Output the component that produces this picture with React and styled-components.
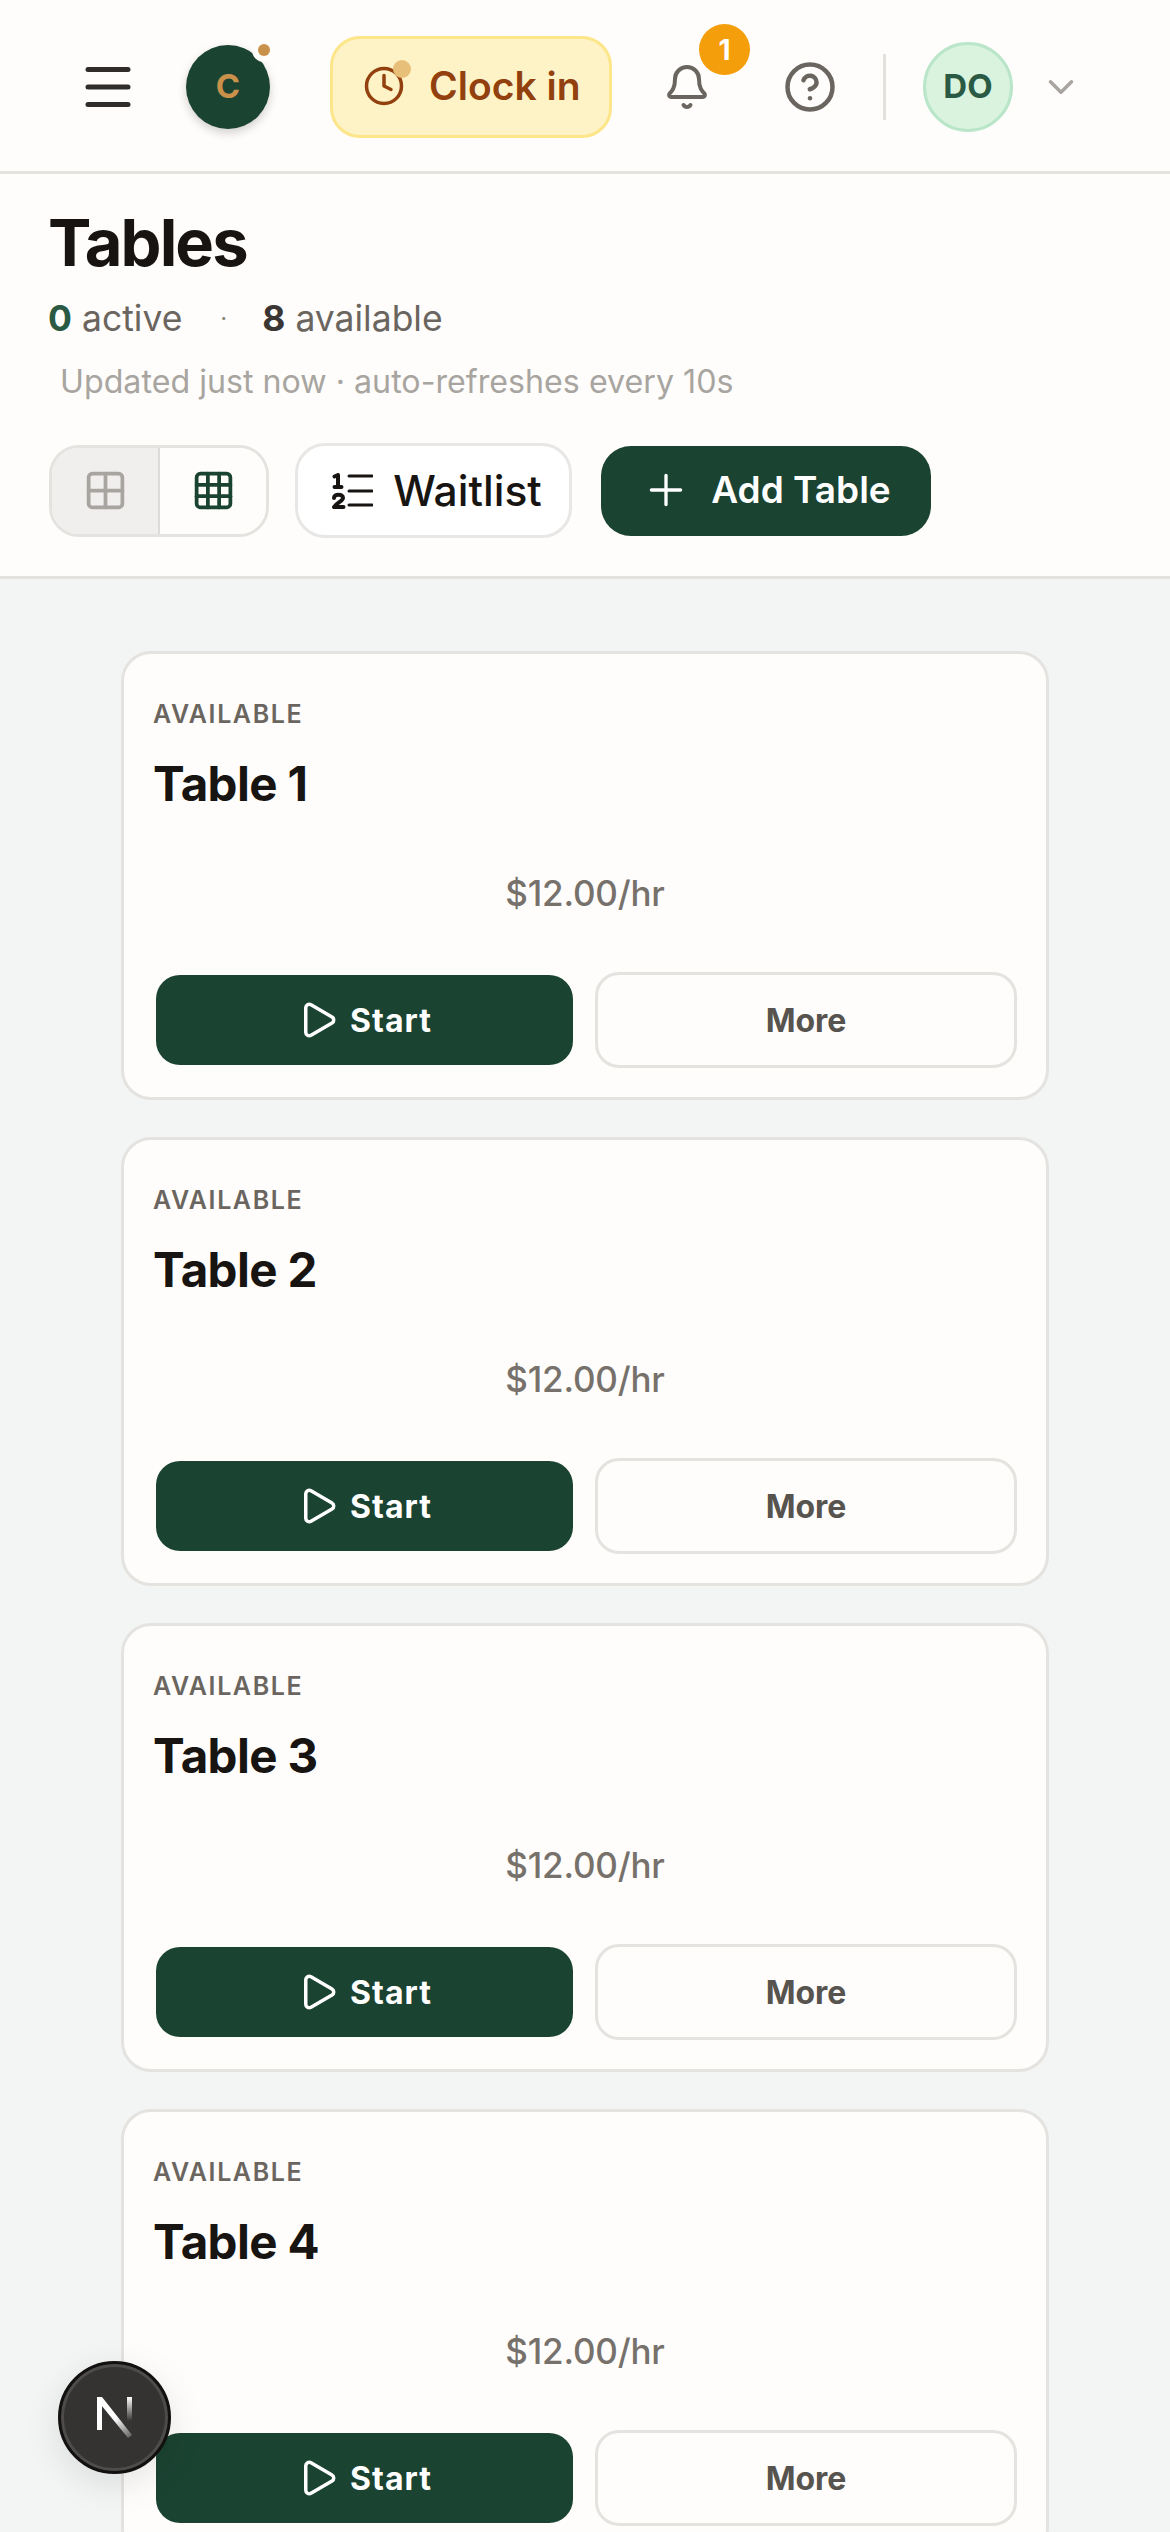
import React from "react";
import styled, { createGlobalStyle } from "styled-components";
import { Menu, Clock, Bell, CircleHelp, ChevronDown, Grid2x2, Grid3x3, Plus, Play } from "lucide-react";

const GlobalStyle = createGlobalStyle`
  html, body {
    margin: 0;
    padding: 0;
    background: #f3f5f5;
  }
  body {
    font-family: Inter, "Liberation Sans", sans-serif;
    color: #171412;
  }
  * { box-sizing: border-box; }
`;

const Page = styled.div`
  position: relative;
  width: 1170px;
  height: 2532px;
  overflow: hidden;
  background: #f3f5f5;
`;

const TopBar = styled.header`
  display: flex;
  align-items: center;
  height: 174px;
  padding: 3px 0 0 78px;
  background: #fefdfb;
  border-bottom: 3px solid #e4e3e0;
`;

const IconSlot = styled.div`
  position: relative;
  display: flex;
  margin-left: ${(props) => props.$left || 0}px;
  color: ${(props) => props.$color || "#6b6560"};
`;

const Logo = styled.div`
  position: relative;
  display: flex;
  align-items: center;
  justify-content: center;
  width: 84px;
  height: 84px;
  margin-left: 48px;
  padding-bottom: 3px;
  border-radius: 50%;
  background: #1b4332;
  color: #c9914a;
  font-size: 33px;
  font-weight: 700;
  box-shadow: 0 4px 10px rgba(0, 0, 0, 0.18);
`;

const LogoDot = styled.span`
  position: absolute;
  top: -1px;
  right: 0;
  width: 12px;
  height: 12px;
  border-radius: 50%;
  background: #c9914a;
  box-shadow: 0 0 0 6px #fefdfb;
`;

const ClockButton = styled.button`
  position: relative;
  display: flex;
  align-items: center;
  width: 282px;
  height: 102px;
  margin-left: 60px;
  padding: 0 0 3px 30px;
  gap: 24px;
  border: 3px solid #fde68a;
  border-radius: 30px;
  background: #fef3c7;
  color: #92400e;
  font-family: inherit;
  font-size: 39px;
  font-weight: 600;
`;

const ClockDot = styled.span`
  position: absolute;
  top: 21px;
  left: 60px;
  width: 18px;
  height: 18px;
  border-radius: 50%;
  background: #e8bf78;
`;

const Badge = styled.span`
  position: absolute;
  top: -39px;
  left: 36px;
  display: flex;
  align-items: center;
  justify-content: center;
  width: 51px;
  height: 51px;
  border-radius: 50%;
  background: #f59e0b;
  color: #ffffff;
  font-size: 28px;
  font-weight: 700;
`;

const Divider = styled.div`
  width: 3px;
  height: 66px;
  margin-left: 46px;
  background: #e2e1de;
`;

const Avatar = styled.div`
  display: flex;
  align-items: center;
  justify-content: center;
  width: 90px;
  height: 90px;
  margin-left: 37px;
  padding-bottom: 3px;
  border: 3px solid #b9e5c8;
  border-radius: 50%;
  background: #d9f3df;
  color: #2a5a43;
  font-size: 33px;
  font-weight: 700;
`;

const SubHeader = styled.section`
  height: 405px;
  padding: 30px 49px 0;
  background: #fefdfb;
  border-bottom: 3px solid #e4e1de;
`;

const Title = styled.h1`
  margin: 0 0 0 -1px;
  font-size: 65px;
  font-weight: 700;
  line-height: 78px;
  letter-spacing: -1.9px;
  color: #171412;
`;

const Stats = styled.div`
  display: flex;
  align-items: center;
  height: 48px;
  margin: 12px 0 0 -1px;
  font-size: 35.5px;
  color: #6b6560;
`;

const StatNumber = styled.strong`
  margin-right: 10px;
  font-weight: 700;
  color: ${(props) => props.$color};
`;

const StatDot = styled.span`
  margin: 0 35px 0 38px;
  font-size: 24px;
  color: #8b8580;
`;

const Updated = styled.div`
  margin: 18px 0 0 11px;
  font-size: 32.2px;
  line-height: 44px;
  color: #a8a5a0;
`;

const Toolbar = styled.div`
  display: flex;
  align-items: center;
  gap: 26px;
  margin-top: 39px;
`;

const ViewToggle = styled.div`
  display: flex;
  width: 220px;
  height: 92px;
  border: 3px solid #e4e3e0;
  border-radius: 30px;
  overflow: hidden;
`;

const ViewOption = styled.div`
  display: flex;
  align-items: center;
  justify-content: center;
  flex: 1;
  background: ${(props) => (props.$muted ? "#f0efed" : "#fefdfb")};
  border-right: ${(props) => (props.$muted ? "2px solid #dddcda" : "none")};
  color: ${(props) => (props.$muted ? "#a8a5a0" : "#1b4332")};
`;

const WaitlistButton = styled.button`
  display: flex;
  align-items: center;
  justify-content: center;
  gap: 20px;
  width: 277px;
  height: 95px;
  padding: 0 0 0 6px;
  border: 3px solid #e8e7e5;
  border-radius: 30px;
  background: #ffffff;
  color: #171412;
  font-family: inherit;
  font-size: 42.5px;
  font-weight: 500;
`;

const AddButton = styled.button`
  display: flex;
  align-items: center;
  justify-content: center;
  gap: 20px;
  width: 330px;
  height: 90px;
  margin: 1px 0 0 3px;
  padding: 0 0 3px;
  border: none;
  border-radius: 30px;
  background: #1b4332;
  color: #ffffff;
  font-family: inherit;
  font-size: 37px;
  font-weight: 600;
`;

const CardList = styled.main`
  display: flex;
  flex-direction: column;
  gap: 37px;
  padding: 72px 121px 0;
`;

const Card = styled.article`
  height: 449px;
  padding: 44px 29px 0;
  border: 3px solid #e4e3e0;
  border-radius: 30px;
  background: #fefdfb;
`;

const Status = styled.div`
  font-size: 25px;
  line-height: 32px;
  font-weight: 600;
  letter-spacing: 1.6px;
  color: #6b6560;
`;

const TableName = styled.h2`
  margin: 25px 0 0;
  font-size: 47.5px;
  line-height: 58px;
  font-weight: 700;
  letter-spacing: -0.6px;
  color: #171412;
`;

const Rate = styled.div`
  margin-top: 57px;
  text-align: center;
  font-size: 35px;
  line-height: 46px;
  font-weight: 500;
  letter-spacing: -0.2px;
  color: #77716c;
`;

const CardActions = styled.div`
  display: flex;
  align-items: center;
  gap: 22px;
  margin-top: 56px;
  padding-left: 3px;
`;

const StartButton = styled.button`
  display: flex;
  align-items: center;
  justify-content: center;
  gap: 11px;
  width: 417px;
  height: 90px;
  padding: 0;
  border: none;
  border-radius: 24px;
  background: #1b4332;
  color: #ffffff;
  font-family: inherit;
  font-size: 32px;
  font-weight: 700;
  letter-spacing: 1px;
`;

const MoreButton = styled.button`
  width: 422px;
  height: 96px;
  padding: 0;
  border: 3px solid #e4e3e0;
  border-radius: 24px;
  background: #fefdfb;
  color: #57534e;
  font-family: inherit;
  font-size: 32px;
  font-weight: 700;
`;

const DevBadge = styled.div`
  position: absolute;
  left: 58px;
  top: 2361px;
  display: flex;
  align-items: center;
  justify-content: center;
  width: 113px;
  height: 113px;
  border: 3px solid #131110;
  border-radius: 50%;
  background: #343332;
  box-shadow: inset 0 0 0 3px #4d4c4a, 0 10px 36px rgba(0, 0, 0, 0.1);
`;

const tables = ["Table 1", "Table 2", "Table 3", "Table 4"];

function NumberedListIcon() {
  return (
    <svg width="42" height="36" viewBox="0 0 42 36" fill="none" stroke="currentColor" strokeLinecap="round" strokeLinejoin="round">
      <path d="M18 3h23M18 18h23M18 32h23" strokeWidth="3" />
      <path d="M3.5 3.5 7 2v12M3.500 14h7" strokeWidth="4" />
      <path d="M3 25c0-4.500 9-4.500 9 0 0 3-6 4.500-9 9H12.500" strokeWidth="4" />
    </svg>
  );
}

function NextMark() {
  return (
    <svg width="36" height="42" viewBox="0 0 36 42" fill="none">
      <defs>
        <linearGradient id="nextDiagonal" x1="20" y1="20" x2="34" y2="41" gradientUnits="userSpaceOnUse">
          <stop offset="0" stopColor="#ffffff" />
          <stop offset="1" stopColor="#ffffff" stopOpacity="0.2" />
        </linearGradient>
        <linearGradient id="nextStem" x1="32" y1="0" x2="32" y2="24" gradientUnits="userSpaceOnUse">
          <stop offset="0" stopColor="#ffffff" />
          <stop offset="1" stopColor="#ffffff" stopOpacity="0" />
        </linearGradient>
      </defs>
      <path d="M0 0h5v33H0z" fill="#ffffff" />
      <path d="M0 0h5l30 38-4 3L0 3z" fill="url(#nextDiagonal)" />
      <path d="M30 0h5v24h-5z" fill="url(#nextStem)" />
    </svg>
  );
}

export default function App() {
  return (
    <Page>
      <GlobalStyle />
      <TopBar>
        <IconSlot $color="#2f2c2a">
          <Menu size={60} strokeWidth={2} />
        </IconSlot>
        <Logo>
          C
          <LogoDot />
        </Logo>
        <ClockButton>
          <Clock size={42} strokeWidth={2} />
          <ClockDot />
          Clock in
        </ClockButton>
        <IconSlot $left={51}>
          <Bell size={48} strokeWidth={2} />
          <Badge>1</Badge>
        </IconSlot>
        <IconSlot $left={72}>
          <CircleHelp size={54} strokeWidth={2} />
        </IconSlot>
        <Divider />
        <Avatar>DO</Avatar>
        <IconSlot $left={27} $color="#a8a5a0">
          <ChevronDown size={42} strokeWidth={2} />
        </IconSlot>
      </TopBar>
      <SubHeader>
        <Title>Tables</Title>
        <Stats>
          <StatNumber $color="#2a5a43">0</StatNumber>
          active
          <StatDot>·</StatDot>
          <StatNumber $color="#3a3633">8</StatNumber>
          available
        </Stats>
        <Updated>Updated just now · auto-refreshes every 10s</Updated>
        <Toolbar>
          <ViewToggle>
            <ViewOption $muted>
              <Grid2x2 size={45} strokeWidth={2} />
            </ViewOption>
            <ViewOption>
              <Grid3x3 size={45} strokeWidth={2} />
            </ViewOption>
          </ViewToggle>
          <WaitlistButton>
            <NumberedListIcon />
            Waitlist
          </WaitlistButton>
          <AddButton>
            <Plus size={50} strokeWidth={1.6} />
            Add Table
          </AddButton>
        </Toolbar>
      </SubHeader>
      <CardList>
        {tables.map((name) => (
          <Card key={name}>
            <Status>AVAILABLE</Status>
            <TableName>{name}</TableName>
            <Rate>$12.00/hr</Rate>
            <CardActions>
              <StartButton>
                <Play size={42} strokeWidth={2} />
                Start
              </StartButton>
              <MoreButton>More</MoreButton>
            </CardActions>
          </Card>
        ))}
      </CardList>
      <DevBadge>
        <NextMark />
      </DevBadge>
    </Page>
  );
}
